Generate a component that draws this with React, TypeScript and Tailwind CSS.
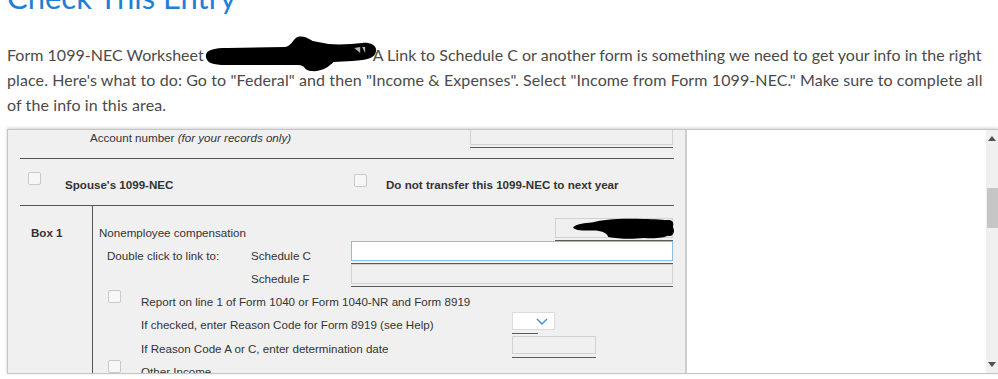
import React from 'react';

const SANS = "font-['Lato','Noto_Sans',sans-serif]";
const ARIAL = "font-['Liberation_Sans',Arial,sans-serif]";

function Scribble({ className }: { className?: string }) {
  return (
    <svg viewBox="0 0 176 40" className={className} preserveAspectRatio="none">
      <path
        d="M2,22 C1,15 9,13 24,13 L82,12 C88,11 90,5 93,3 C97,0 104,2 110,6 L126,9 C138,10 150,9 160,8 C167,7 175,10 174,16 C173,23 166,25 150,26 L131,27 C126,32 119,37 108,36 C100,35 104,31 96,30 L22,30 C9,30 3,28 2,22 Z"
        fill="#000"
      />
      <path d="M152,13 L158,12 L158,18 Z M160,12 L163,12 L163,18 Z" fill="#fff" opacity="0.7" />
    </svg>
  );
}

function BlobOverInput() {
  return (
    <svg viewBox="0 0 100 20" className="absolute left-[17px] top-[-1px] h-[21px] w-[101px]" preserveAspectRatio="none">
      <path
        d="M0,9 C2,6 10,5 20,4 C30,1 50,0 70,1 C80,1 90,2 96,2 C99,3 100,5 99,8 L100,12 C100,16 97,18 94,17 C90,19 80,20 70,19 C60,20 45,20 35,18 C33,14 28,12 20,12 C10,12 2,12 0,9 Z"
        fill="#000"
      />
    </svg>
  );
}

function Checkbox({ className }: { className?: string }) {
  return (
    <div
      className={`h-[13px] w-[13px] shrink-0 rounded-[2px] border border-[#c9c9c9] bg-[#f7f7f7] ${className ?? ''}`}
    />
  );
}

function UnderlinedInput({
  width,
  white,
  blue,
  children,
  className,
}: {
  width: string;
  white?: boolean;
  blue?: boolean;
  children?: React.ReactNode;
  className?: string;
}) {
  return (
    <div className={`${width} shrink-0 border-b border-[#5a5a5a] pb-[2px] ${className ?? ''}`}>
      <div
        className={`relative h-[20px] border ${blue ? 'border-[#86bde9]' : 'border-[#d2d2d2]'} ${
          white ? 'bg-white' : 'bg-[#f0f0f0]'
        }`}
      >
        {children}
      </div>
    </div>
  );
}

function Scrollbar() {
  return (
    <div className="flex w-[12px] shrink-0 flex-col items-center bg-[#f0f0f0]">
      <svg width="8" height="5" viewBox="0 0 8 5" className="mt-[6px]">
        <polygon points="4,0 8,5 0,5" fill="#505050" />
      </svg>
      <div className="mt-[47px] h-[40px] w-[11px] bg-[#c6c6c6]" />
      <div className="flex-1" />
      <svg width="8" height="5" viewBox="0 0 8 5" className="mb-[6px]">
        <polygon points="0,0 8,0 4,5" fill="#505050" />
      </svg>
    </div>
  );
}

export default function App() {
  return (
    <div className="h-[379px] w-[998px] overflow-hidden bg-white pl-[7px]">
      {/* Heading (scrolled partly out of view) */}
      <h1 className={`${SANS} -mt-[22px] text-[31px] leading-[38px] text-[#1f7fd5]`}>Check This Entry</h1>

      <div className={`${SANS} mt-[26px] text-[16px] leading-[25px] tracking-[0.1px] text-[#4a4a4a]`}>
        <div className="whitespace-nowrap tracking-[0.01px]">
          Form 1099-NEC Worksheet
          <span className="relative inline-block h-[10px] w-[169px] align-middle">
            <Scribble className="absolute left-[0px] top-[-17px] h-[40px] w-[174px]" />
          </span>
          A Link to Schedule C or another form is something we need to get your info in the right
        </div>
        <div className="whitespace-nowrap">
          place. Here's what to do: Go to "Federal" and then "Income &amp; Expenses". Select "Income from Form
          1099-NEC." Make sure to complete all
        </div>
        <div className="whitespace-nowrap">of the info in this area.</div>
      </div>

      {/* Embedded form window */}
      <div className="mt-[12px] flex h-[245px] border border-r-0 border-[#c4c4c4] shadow-[0_-1px_3px_rgba(0,0,0,0.18)]">
        <div className={`${ARIAL} w-[677px] shrink-0 overflow-hidden bg-[#f0f0f0] pl-[12px] pr-[11px] text-[11.6px] leading-[14px] text-[#333]`}>
          <div className="-mt-[5px]">
            {/* Account number */}
            <div className="flex h-[34px] items-start border-b border-[#555]">
              <span className="ml-[70px] mt-[6px]">
                Account number <i>(for your records only)</i>
              </span>
              <div className="flex-1" />
              <UnderlinedInput width="w-[203px]" className="mr-[1px]" />
            </div>

            {/* Checkboxes */}
            <div className="flex h-[47px] items-start border-b border-[#555] font-bold">
              <div className="flex w-[334px] items-start">
                <Checkbox className="ml-[8px] mt-[13px]" />
                <span className="ml-[24px] mt-[19px]">Spouse's 1099-NEC</span>
              </div>
              <Checkbox className="mt-[15px]" />
              <span className="ml-[19px] mt-[19px]">Do not transfer this 1099-NEC to next year</span>
            </div>

            {/* Box 1 */}
            <div className="flex">
              <div className="w-[73px] shrink-0 border-r border-[#555] pl-[11px] pt-[15px] font-bold">
                <div className="flex h-[23px] items-center">Box 1</div>
                <div className="h-[200px]" />
              </div>
              <div className="flex-1 pt-[15px]">
                <div className="flex h-[23px] items-center">
                  <span className="ml-[6px]">Nonemployee compensation</span>
                  <UnderlinedInput width="w-[118px]" className="mb-[6px] ml-auto mr-[1px]">
                    <BlobOverInput />
                  </UnderlinedInput>
                </div>
                <div className="flex h-[23px] items-center">
                  <span className="ml-[14px] w-[144px]">Double click to link to:</span>
                  <span>Schedule C</span>
                  <UnderlinedInput width="w-[322px]" white blue className="mb-[6px] ml-auto mr-[1px]" />
                </div>
                <div className="flex h-[23px] items-center">
                  <span className="ml-[158px]">Schedule F</span>
                  <UnderlinedInput width="w-[322px]" className="mb-[6px] ml-auto mr-[1px]" />
                </div>
                <div className="flex h-[23px] items-center">
                  <Checkbox className="mb-[10px] ml-[15px]" />
                  <span className="ml-[20px]">Report on line 1 of Form 1040 or Form 1040-NR and Form 8919</span>
                </div>
                <div className="flex h-[24px] items-center">
                  <span className="ml-[48px] w-[371px]">If checked, enter Reason Code for Form 8919 (see Help)</span>
                  <div className="mb-[4px] w-[43px]">
                    <div className="flex h-[18px] items-center justify-end border border-[#dcdcdc] bg-white pr-[6px]">
                      <svg width="12" height="7" viewBox="0 0 12 7">
                        <polyline points="1,1 6,6 11,1" fill="none" stroke="#3a8fd8" strokeWidth="1.4" />
                      </svg>
                    </div>
                    <div className="mt-[3px] h-px w-[26px] bg-[#5a5a5a]" />
                  </div>
                </div>
                <div className="flex h-[23px] items-center">
                  <span className="ml-[48px] w-[371px]">If Reason Code A or C, enter determination date</span>
                  <div className="mb-[3px] w-[84px] border-b border-[#5a5a5a] pb-[3px]">
                    <div className="h-[18px] border border-[#d2d2d2] bg-[#f0f0f0]" />
                  </div>
                </div>
                <div className="flex h-[23px] items-center">
                  <Checkbox className="mb-[10px] ml-[15px]" />
                  <span className="ml-[20px]">Other Income</span>
                </div>
              </div>
            </div>
          </div>
        </div>
        <div className="w-[2px] shrink-0 bg-[#cdcdcd]" />
        <div className="flex-1 bg-white" />
        <Scrollbar />
      </div>
    </div>
  );
}
